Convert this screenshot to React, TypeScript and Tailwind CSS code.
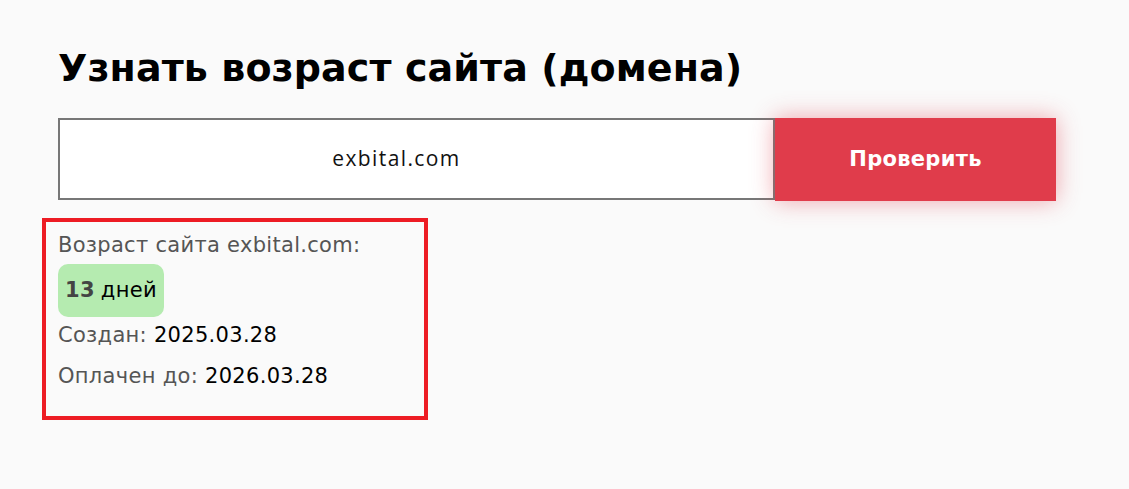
import React from "react";

export default function App() {
  return (
    <div className="min-h-[489px] w-full bg-[#fafafa] pl-[58px] pt-[38px]">
      <div className="font-['DejaVu_Sans',sans-serif]">
        <h1 className="text-[38px] font-bold leading-[60px] tracking-[0.1px] text-black">Узнать возраст сайта (домена)</h1>
        <div className="mt-[20px] flex w-[998px]">
          <div className="flex h-[82px] w-[717px] items-center justify-center border-2 border-[#777777] bg-white pr-[40px] font-['Open_Sans',sans-serif] text-[21px] tracking-[1.4px] text-[#111]">
            exbital.com
          </div>
          <button className="flex h-[83px] w-[281px] items-center justify-center bg-[#e03c4b] text-[21px] font-bold tracking-[0.3px] text-white shadow-[0_0_22px_rgba(224,60,75,0.45)]">
            Проверить
          </button>
        </div>
        <div className="-ml-[16px] mt-[17px] w-[386px] border-4 border-[#ed1c24] px-[12px] pb-[22px] pt-[8px] text-[21px] tracking-[0.3px]">
          <div className="leading-[30px] text-[#555]">Возраст сайта exbital.com:</div>
          <div className="mt-[4px] inline-flex h-[53px] items-center rounded-[10px] bg-[#b5ebb0] px-[7px]">
            <span className="font-bold text-[#444]">13</span>
            <span className="ml-[6px] text-black">дней</span>
          </div>
          <div className="mt-[0px] leading-[36px] text-[#555]">
            Создан: <span className="text-black">2025.03.28</span>
          </div>
          <div className="mt-[5px] leading-[36px] text-[#555]">
            Оплачен до: <span className="text-black">2026.03.28</span>
          </div>
        </div>
      </div>
    </div>
  );
}
